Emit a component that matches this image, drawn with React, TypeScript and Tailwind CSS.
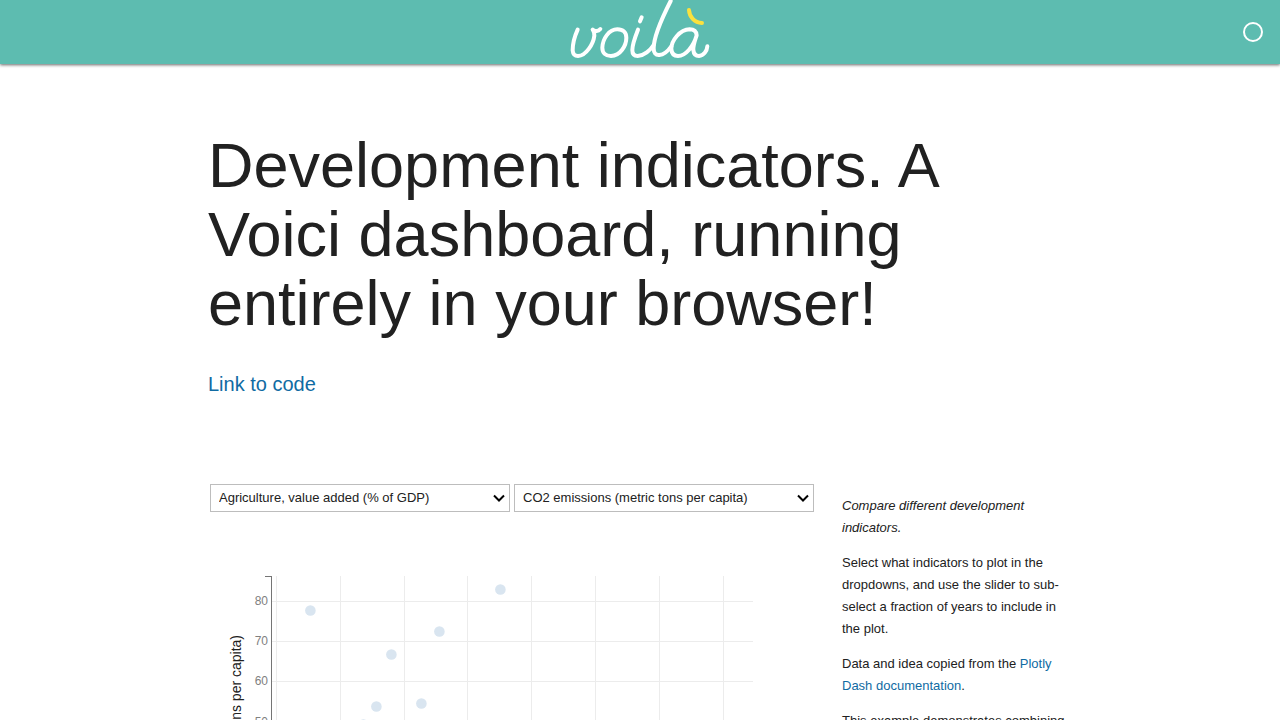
import { useState } from "react";

const INDICATORS = [
  "Agriculture, value added (% of GDP)",
  "CO2 emissions (metric tons per capita)",
];

const POINTS: [number, number][] = [
  [100, 98],
  [181, 142],
  [166, 194],
  [211, 191],
  [229, 119],
  [290, 77],
  [153, 212],
];

function VoilaLogo() {
  return (
    <svg
      viewBox="0 0 480 192"
      className="h-16 w-40"
      fill="none"
      stroke="#fff"
      strokeWidth="12"
      strokeLinecap="round"
      strokeLinejoin="round"
      role="img"
      aria-label="voilà"
    >
      <path d="M53 89C43 111 38 132 38 151C39 163 45 168 54 168C78 167 100 132 103 107C103 98 101 93 98 89C104 96 115 94 121 87" />
      <path d="M172 88C147 88 128 116 127 143C127 159 137 168 153 168C181 167 199 137 199 113C199 97 189 88 172 88Z" />
      <path d="M234 89C225 112 217 132 217 150C217 162 223 168 233 168C252 167 271 151 281 135" />
      <path d="M245 52L240 64" />
      <path d="M332 3C306 54 281 111 281 145C281 159 287 166 298 165C312 164 324 153 334 139" />
      <path d="M410 106C409 94 401 88 389 88C360 89 334 121 334 147C335 161 342 168 354 168C377 168 401 139 410 106C404 124 399 136 400 150C401 161 406 168 417 168C431 167 441 153 442 139" />
      <path d="M387 30C388 50 403 68 426 69" stroke="#fbe13e" />
    </svg>
  );
}

function IndicatorSelect({ label, initial }: { label: string; initial: string }) {
  const [value, setValue] = useState(initial);
  return (
    <div className="grid flex-1 grid-cols-1 items-center">
      <select
        aria-label={label}
        value={value}
        onChange={(e) => setValue(e.target.value)}
        className="col-start-1 row-start-1 h-7 w-full appearance-none rounded-none border border-[#bdbdbd] bg-white px-2 text-[13px] text-[#212121]"
      >
        {INDICATORS.map((name) => (
          <option key={name}>{name}</option>
        ))}
      </select>
      <svg
        viewBox="0 0 12 8"
        className="pointer-events-none col-start-1 row-start-1 mr-[5px] h-2 w-3 justify-self-end"
        fill="none"
        stroke="#000"
        strokeWidth="2"
        aria-hidden="true"
      >
        <path d="M1 1.5L6 6.5L11 1.5" />
      </svg>
    </div>
  );
}

function ScatterPlot() {
  const columns = [66, 130, 194, 257, 321, 385, 449, 513];
  const rows = [80, 70, 60, 50, 40, 30, 20, 10, 0];
  return (
    <svg
      viewBox="0 0 604 480"
      className="w-full"
      role="img"
      aria-label="Scatter plot of the two indicators"
    >
      <g stroke="#ececec" shapeRendering="crispEdges">
        {columns.map((x) => (
          <line key={x} x1={x + 0.5} x2={x + 0.5} y1="64" y2="428" />
        ))}
        {rows.map((v, i) => (
          <line key={v} x1="61" x2="543" y1={89.5 + Math.round(i * 40.2)} y2={89.5 + Math.round(i * 40.2)} />
        ))}
      </g>
      <path d="M55 64.5H61.5V428.5H543" fill="none" stroke="#757575" shapeRendering="crispEdges" />
      <g fill="#808080" fontSize="12" textAnchor="end">
        {rows.map((v, i) => (
          <text key={v} x="58" y={93 + Math.round(i * 40.2)}>
            {v}
          </text>
        ))}
      </g>
      <g fill="#808080" fontSize="12" textAnchor="middle">
        {columns.map((x, i) => (
          <text key={x} x={x} y="444">
            {i * 10}
          </text>
        ))}
      </g>
      <text transform="translate(31 123) rotate(-90)" textAnchor="end" fontSize="14" fill="#212121">
        CO2 emissions (metric tons per capita)
      </text>
      <text x="302" y="470" textAnchor="middle" fontSize="14" fill="#212121">
        Agriculture, value added (% of GDP)
      </text>
      <g fill="#d9e5f0">
        {POINTS.map(([x, y]) => (
          <circle key={`${x}-${y}`} cx={x + 0.4} cy={y + 0.5} r="5.3" />
        ))}
      </g>
    </svg>
  );
}

export default function App() {
  return (
    <div className="min-h-screen bg-white font-['Liberation_Sans',Arial,sans-serif] text-[#212121]">
      <header className="sticky top-0 z-10 grid h-16 grid-cols-[1fr_auto_1fr] items-center bg-[#5dbcb0] shadow-[0_1px_3px_rgba(0,0,0,0.6)]">
        <div />
        <VoilaLogo />
        <svg viewBox="0 0 20 20" className="mr-[17px] size-5 justify-self-end" aria-label="Kernel idle" role="img">
          <circle cx="10" cy="10" r="9" fill="none" stroke="#fff" strokeWidth="2" />
        </svg>
      </header>

      <main className="px-[208px] pt-[67px]">
        <h1 className="text-[63px] leading-[69px]">
          Development indicators. A Voici dashboard, running entirely in your browser!
        </h1>
        <p className="mt-[31px] text-[20px] leading-[30px]">
          <a href="#code" className="text-[#106ba3]">
            Link to code
          </a>
        </p>

        <div className="mt-[85px] flex items-start gap-7 pl-0.5">
          <section className="w-[604px] shrink-0">
            <div className="flex gap-1">
              <IndicatorSelect label="X axis indicator" initial={INDICATORS[0]} />
              <IndicatorSelect label="Y axis indicator" initial={INDICATORS[1]} />
            </div>
            <ScatterPlot />
          </section>

          <aside className="flex min-w-0 flex-1 flex-col gap-[13px] pt-[11px] text-[13px] leading-[22px]">
            <p className="italic">Compare different development indicators.</p>
            <p>
              Select what indicators to plot in the dropdowns, and use the slider to sub-select a
              fraction of years to include in the plot.
            </p>
            <p>
              Data and idea copied from the{" "}
              <a href="#documentation" className="text-[#106ba3]">
                Plotly Dash documentation
              </a>
              .
            </p>
            <p>This example demonstrates combining</p>
          </aside>
        </div>
      </main>
    </div>
  );
}
